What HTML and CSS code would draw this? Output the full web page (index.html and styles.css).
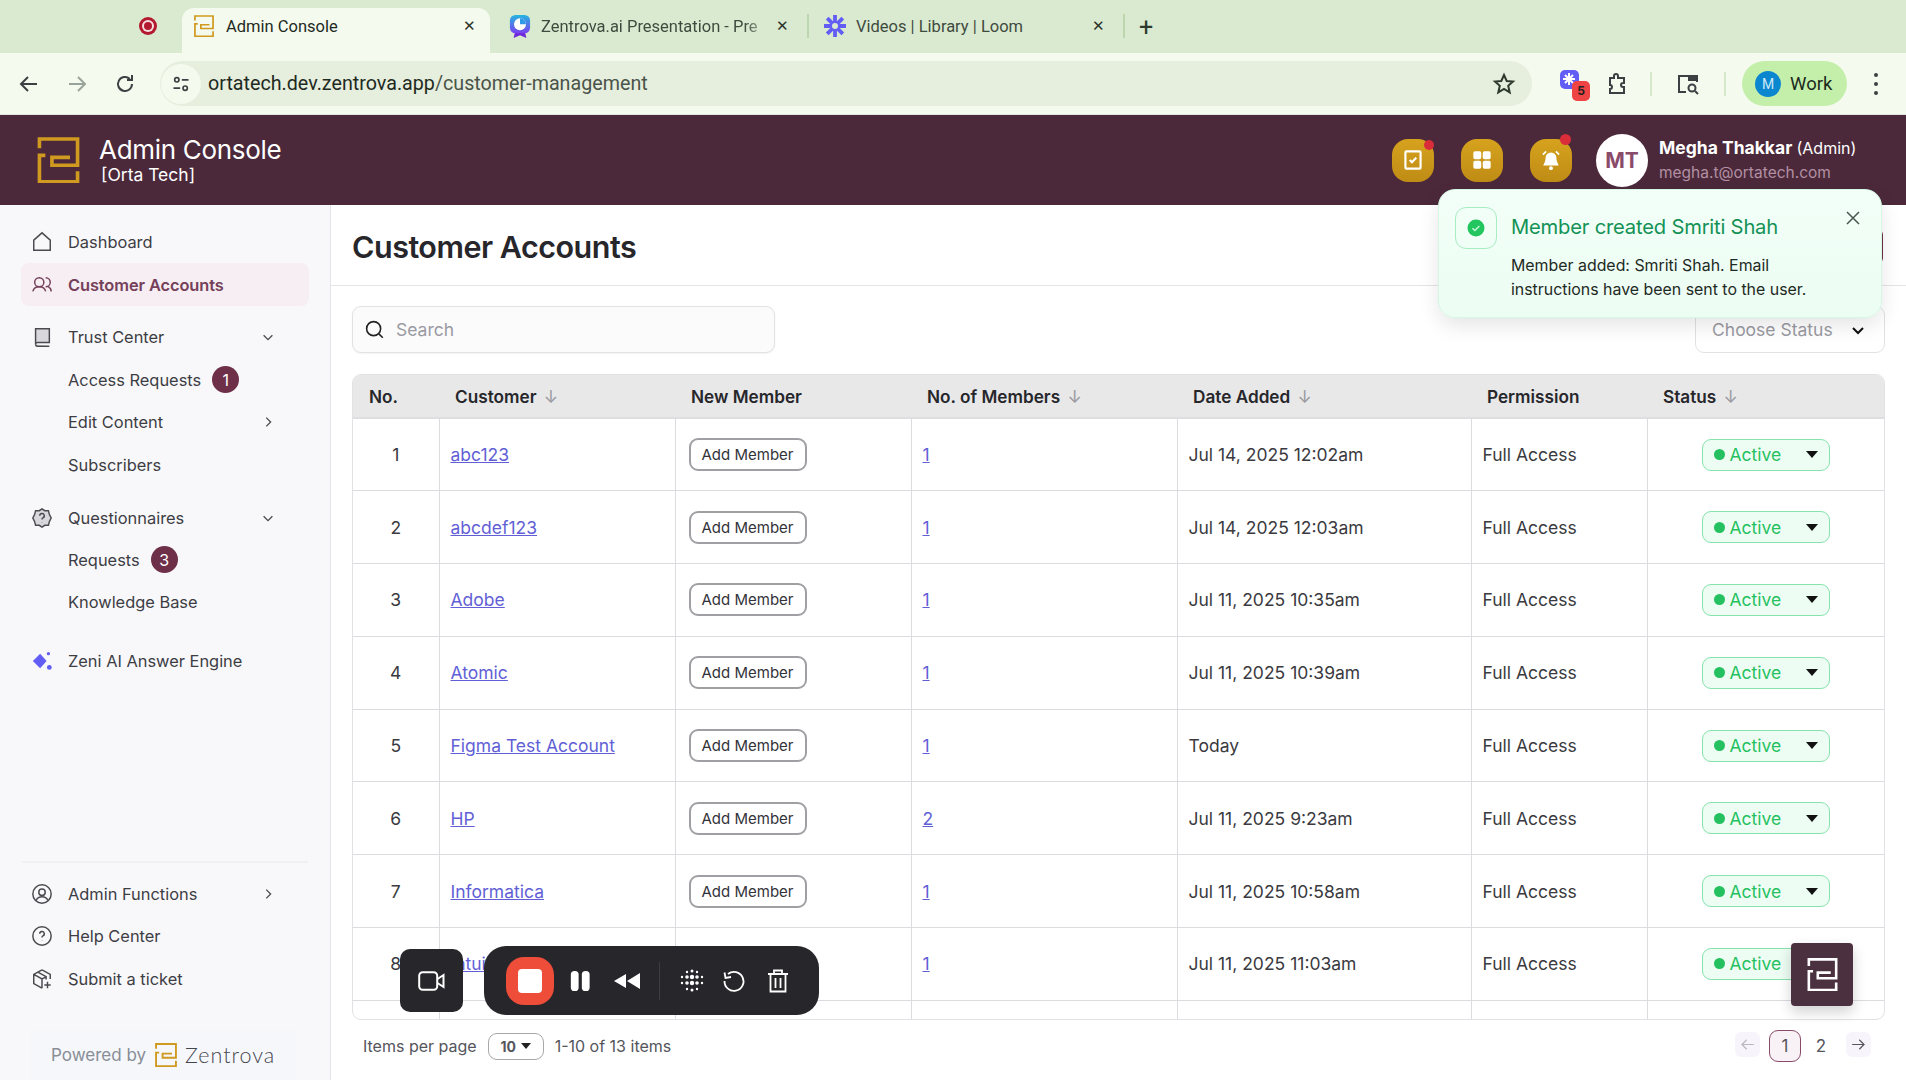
FILE: index.html
```html
<!DOCTYPE html>
<html lang="en">
<head>
<meta charset="utf-8">
<title>Admin Console</title>
<link rel="stylesheet" href="styles.css">
</head>
<body>
<div class="tabbar">
  <svg class="rec" viewBox="0 0 20 20"><circle cx="10" cy="10" r="9" fill="#b3192f"/><circle cx="10" cy="10" r="6" fill="#f4dfe0"/><circle cx="10" cy="10" r="4" fill="#b3192f"/></svg>
  <div class="tab tab-active">
    <svg class="fav" viewBox="36 36 128 140"><path class="logo-line" d="M42 70V42H158V122H80V98H135M60 92H42V172H158V140"/></svg>
    <span class="tab-title">Admin Console</span>
    <span class="tab-x">✕</span>
  </div>
  <div class="tab tab-two">
    <svg class="fav fav-deck" viewBox="0 0 24 26"><defs><linearGradient id="deck" x1="0" y1="0" x2="0" y2="1"><stop offset="0" stop-color="#25b6e0"/><stop offset="1" stop-color="#7a3ff0"/></linearGradient></defs><path d="M7 18l-2 8 7-3 7 3-2-8z" fill="#6d28d9"/><rect x="1" y="1" width="22" height="20" rx="6" fill="url(#deck)"/><circle cx="12" cy="11" r="6.500" fill="#fff"/><path d="M12 11V4.500a6.500 6.500 0 0 1 6.500 6.500z" fill="#2f9be8"/></svg>
    <span class="tab-title fade">Zentrova.ai Presentation - Pre</span>
    <span class="tab-x">✕</span>
  </div>
  <i class="tab-sep"></i>
  <div class="tab tab-three">
    <svg class="fav" viewBox="0 0 24 24"><g stroke="#625df5" stroke-width="3.800"><path d="M12 1v22M1 12h22M4.200 4.200l15.600 15.600M19.800 4.200L4.200 19.800"/></g><circle cx="12" cy="12" r="3" fill="#d9ead0"/></svg>
    <span class="tab-title">Videos | Library | Loom</span>
    <span class="tab-x">✕</span>
  </div>
  <i class="tab-sep"></i>
  <span class="tab-new">+</span>
</div>

<div class="toolbar">
  <svg class="tool" viewBox="0 0 24 24"><path d="M20 12H5M11 5l-7 7 7 7"/></svg>
  <svg class="tool tool-off" viewBox="0 0 24 24"><path d="M4 12h15M13 5l7 7-7 7"/></svg>
  <svg class="tool" viewBox="0 0 24 24"><path d="M19 12a7 7 0 1 1-2.200-5.100M19 3v5h-5"/></svg>
  <div class="omnibox">
    <span class="site-ctl"><svg viewBox="0 0 24 24"><circle cx="7" cy="7" r="2.600"/><path d="M13 7h8M3 17h8"/><circle cx="17" cy="17" r="2.600"/></svg></span>
    <span class="url">ortatech.dev.zentrova.app<span class="url-path">/customer-management</span></span>
    <svg class="star" viewBox="0 0 24 24"><path d="M12 3l2.700 6 6.300.6-4.800 4.200 1.500 6.500-5.700-3.500-5.700 3.500 1.500-6.500L3 9.600 9.300 9z"/></svg>
  </div>
  <div class="ext">
    <svg viewBox="0 0 24 24"><rect x="1" y="1" width="19" height="19" rx="5" fill="#625df5"/><g stroke="#fff" stroke-width="2"><path d="M10 4v12M4 10h12M6 6l8 8M14 6l-8 8"/></g></svg>
    <span class="ext-badge">5</span>
  </div>
  <svg class="tool puzzle" viewBox="0 0 24 24"><path d="M5 6h4V4a2 2 0 0 1 4 0v2h6v5h-1a2 2 0 0 0 0 4h1v6H5v-4a2 2 0 0 0 0-4V6z"/></svg>
  <i class="tool-sep"></i>
  <svg class="tool lens" viewBox="0 0 24 24"><path d="M10 20H3V4h18v6"/><rect x="13" y="4" width="8" height="4" fill="#3c4043"/><circle cx="16" cy="16" r="3.500"/><path d="M19 19l3 3"/></svg>
  <i class="tool-sep sep-two"></i>
  <div class="profile"><span class="profile-m">M</span><span>Work</span></div>
  <div class="kebab"><i></i><i></i><i></i></div>
</div>

<header class="app-head">
  <svg class="brand" viewBox="36 36 128 140"><path class="logo-line" d="M42 70V42H158V122H80V98H135M60 92H42V172H158V140"/></svg>
  <div class="brand-text">
    <div class="brand-name">Admin Console</div>
    <div class="brand-org">[Orta Tech]</div>
  </div>
  <div class="head-icons">
    <span class="head-btn dot-in"><svg viewBox="0 0 24 24"><rect x="5" y="4" width="14" height="16" rx="1" fill="none" stroke="#fff" stroke-width="2"/><path d="M9 12l2 2 4-4" fill="none" stroke="#fff" stroke-width="2"/></svg></span>
    <span class="head-btn"><svg viewBox="0 0 24 24"><rect x="4" y="4" width="7.300" height="7.300" rx="1.500" fill="#fff"/><rect x="12.700" y="4" width="7.300" height="7.300" rx="1.500" fill="#fff"/><rect x="4" y="12.700" width="7.300" height="7.300" rx="1.500" fill="#fff"/><rect x="12.700" y="12.700" width="7.300" height="7.300" rx="1.500" fill="#fff"/></svg></span>
    <span class="head-btn dot-out"><svg viewBox="0 0 24 24"><path d="M12 5a5 5 0 0 0-5 5c0 4-2 6-2 7h14c0-1-2-3-2-7a5 5 0 0 0-5-5z" fill="#fff"/><circle cx="12" cy="19.500" r="1.800" fill="#fff"/><path d="M4.500 7l3-3M19.500 7l-3-3" stroke="#fff" stroke-width="1.500"/></svg></span>
  </div>
  <div class="avatar">MT</div>
  <div class="user">
    <div class="user-name">Megha Thakkar <span class="user-role">(Admin)</span></div>
    <div class="user-mail">megha.t@ortatech.com</div>
  </div>
</header>

<div class="shell">
  <aside class="sidebar">
    <div class="nav-group">
      <div class="nav-item"><svg class="nav-ic" viewBox="0 0 24 24"><path d="M3 21V10l9-8 9 8v11z"/></svg><span>Dashboard</span></div>
      <div class="nav-item nav-active"><svg class="nav-ic" viewBox="0 0 24 24"><circle cx="9" cy="9" r="5"/><path d="M2 19c1-4 4-5 7-5s6 1 7 5M16 4a5 5 0 0 1 0 10M19 14c2 1 3 3 3 5"/></svg><span>Customer Accounts</span></div>
    </div>
    <div class="nav-group">
      <div class="nav-item"><svg class="nav-ic ic-fill" viewBox="0 0 24 24"><path d="M5 3h15v15H7a2 2 0 0 0-2 2z"/><path d="M5 20a2 2 0 0 0 2 2h13"/></svg><span>Trust Center</span><svg class="chev" viewBox="0 0 16 16"><path d="M3 6l5 5 5-5"/></svg></div>
      <div class="nav-item nav-sub"><span>Access Requests</span><b class="count">1</b></div>
      <div class="nav-item nav-sub"><span>Edit Content</span><svg class="chev" viewBox="0 0 16 16"><path d="M6 3l5 5-5 5"/></svg></div>
      <div class="nav-item nav-sub"><span>Subscribers</span></div>
    </div>
    <div class="nav-group">
      <div class="nav-item"><svg class="nav-ic ic-fill" viewBox="0 0 24 24"><path d="M12 2l3 2 4 0 1 4 2 4-2 4-1 4-4 0-3 2-3-2-4 0-1-4-2-4 2-4 1-4 4 0z"/><path d="M9.500 9.500a2.500 2.500 0 1 1 3.500 2.300c-.7.300-1 .8-1 1.700M12 16.500v.5"/></svg><span>Questionnaires</span><svg class="chev" viewBox="0 0 16 16"><path d="M3 6l5 5 5-5"/></svg></div>
      <div class="nav-item nav-sub"><span>Requests</span><b class="count">3</b></div>
      <div class="nav-item nav-sub"><span>Knowledge Base</span></div>
    </div>
    <div class="nav-group nav-zeni">
      <div class="nav-item"><svg class="nav-ic ic-zeni" viewBox="0 0 24 24"><path d="M10 4l7 8-7 8-8-8z"/><circle cx="19" cy="4" r="1.800"/><circle cx="20" cy="19" r="2.600"/></svg><span>Zeni AI Answer Engine</span></div>
    </div>
    <div class="nav-spacer"></div>
    <div class="nav-bottom">
      <div class="nav-item"><svg class="nav-ic" viewBox="0 0 24 24"><circle cx="12" cy="12" r="10"/><circle cx="12" cy="10" r="3.500"/><path d="M5.500 19c1.500-3 4-4 6.500-4s5 1 6.500 4"/></svg><span>Admin Functions</span><svg class="chev" viewBox="0 0 16 16"><path d="M6 3l5 5-5 5"/></svg></div>
      <div class="nav-item"><svg class="nav-ic" viewBox="0 0 24 24"><circle cx="12" cy="12" r="10"/><path d="M9.500 9.500a2.500 2.500 0 1 1 3.500 2.300c-.7.300-1 .8-1 1.700M12 16.500v.5"/></svg><span>Help Center</span></div>
      <div class="nav-item"><svg class="nav-ic" viewBox="0 0 24 24"><path d="M12 2l9 5v5M12 2L3 7v10l9 5M3 7l9 5 4-2M7.500 4.500l9 5v3M12 12v10"/><path d="M18 15v7M14.500 18.500h7"/></svg><span>Submit a ticket</span></div>
    </div>
    <div class="powered">
      <span>Powered by</span>
      <svg class="pow-logo" viewBox="36 36 128 140"><path class="logo-line" d="M42 70V42H158V122H80V98H135M60 92H42V172H158V140"/></svg>
      <span class="pow-name">Zentrova</span>
    </div>
  </aside>

  <main class="main">
    <div class="title-row">
      <h1>Customer Accounts</h1>
      <button class="cta">Add Customer</button>
    </div>
    <div class="filters">
      <div class="search">
        <svg viewBox="0 0 24 24"><circle cx="11" cy="11" r="8"/><path d="M17 17l4.500 4.500"/></svg>
        <span>Search</span>
      </div>
      <div class="status-filter"><span>Choose Status</span><svg viewBox="0 0 16 16"><path d="M3 6l5 5 5-5"/></svg></div>
    </div>
    <div class="table-wrap">
      <table>
        <colgroup><col class="c1"><col class="c2"><col class="c3"><col class="c4"><col class="c5"><col class="c6"><col class="c7"></colgroup>
        <thead>
          <tr>
            <th>No.</th>
            <th>Customer <span class="sort">↓</span></th>
            <th>New Member</th>
            <th>No. of Members <span class="sort">↓</span></th>
            <th>Date Added <span class="sort">↓</span></th>
            <th>Permission</th>
            <th>Status <span class="sort">↓</span></th>
          </tr>
        </thead>
        <tbody>
          <tr><td class="num">1</td><td><a href="#">abc123</a></td><td><button class="add">Add Member</button></td><td><a href="#">1</a></td><td>Jul 14, 2025 12:02am</td><td>Full Access</td><td class="st"><span class="pill"><i></i>Active<b></b></span></td></tr>
          <tr><td class="num">2</td><td><a href="#">abcdef123</a></td><td><button class="add">Add Member</button></td><td><a href="#">1</a></td><td>Jul 14, 2025 12:03am</td><td>Full Access</td><td class="st"><span class="pill"><i></i>Active<b></b></span></td></tr>
          <tr><td class="num">3</td><td><a href="#">Adobe</a></td><td><button class="add">Add Member</button></td><td><a href="#">1</a></td><td>Jul 11, 2025 10:35am</td><td>Full Access</td><td class="st"><span class="pill"><i></i>Active<b></b></span></td></tr>
          <tr><td class="num">4</td><td><a href="#">Atomic</a></td><td><button class="add">Add Member</button></td><td><a href="#">1</a></td><td>Jul 11, 2025 10:39am</td><td>Full Access</td><td class="st"><span class="pill"><i></i>Active<b></b></span></td></tr>
          <tr><td class="num">5</td><td><a href="#">Figma Test Account</a></td><td><button class="add">Add Member</button></td><td><a href="#">1</a></td><td>Today</td><td>Full Access</td><td class="st"><span class="pill"><i></i>Active<b></b></span></td></tr>
          <tr><td class="num">6</td><td><a href="#">HP</a></td><td><button class="add">Add Member</button></td><td><a href="#">2</a></td><td>Jul 11, 2025 9:23am</td><td>Full Access</td><td class="st"><span class="pill"><i></i>Active<b></b></span></td></tr>
          <tr><td class="num">7</td><td><a href="#">Informatica</a></td><td><button class="add">Add Member</button></td><td><a href="#">1</a></td><td>Jul 11, 2025 10:58am</td><td>Full Access</td><td class="st"><span class="pill"><i></i>Active<b></b></span></td></tr>
          <tr><td class="num">8</td><td><a href="#">Intuit</a></td><td><button class="add">Add Member</button></td><td><a href="#">1</a></td><td>Jul 11, 2025 11:03am</td><td>Full Access</td><td class="st"><span class="pill"><i></i>Active<b></b></span></td></tr>
          <tr><td class="num"></td><td></td><td></td><td></td><td></td><td></td><td></td></tr>
        </tbody>
      </table>
    </div>
    <div class="pager">
      <span>Items per page</span>
      <span class="per"><b>10</b><i></i></span>
      <span>1-10 of 13 items</span>
      <div class="pages">
        <svg class="pg-arrow pg-off" viewBox="0 0 24 24"><path d="M20 12H5M11 6l-6 6 6 6"/></svg>
        <span class="pg pg-on">1</span>
        <span class="pg">2</span>
        <svg class="pg-arrow pg-next" viewBox="0 0 24 24"><path d="M4 12h15M13 6l6 6-6 6"/></svg>
      </div>
    </div>
  </main>
</div>

<div class="toast">
  <span class="toast-ic"><svg viewBox="0 0 20 20"><circle cx="10" cy="10" r="8.500" fill="#22c55e"/><path d="M6.500 10.200l2.400 2.300 4.500-4.600" fill="none" stroke="#c9f7da" stroke-width="1.500"/></svg></span>
  <div class="toast-body">
    <div class="toast-title">Member created Smriti Shah</div>
    <div class="toast-text">Member added: Smriti Shah. Email instructions have been sent to the user.</div>
  </div>
  <svg class="toast-x" viewBox="0 0 16 16"><path d="M2 2l12 12M14 2L2 14"/></svg>
</div>

<div class="cam"><svg viewBox="0 0 28 20"><rect x="1.200" y="1.200" width="18" height="17.600" rx="3.500"/><path d="M19.500 8l6-4v12l-6-4"/></svg></div>
<div class="rec-bar">
  <span class="rec-stop"><i></i></span>
  <svg class="rb-ic rb-pause" viewBox="0 0 24 24"><rect x="2" y="1" width="8.500" height="22" rx="4" fill="#fff"/><rect x="14" y="1" width="8.500" height="22" rx="4" fill="#fff"/></svg>
  <svg class="rb-ic rb-rew" viewBox="0 0 28 20"><path d="M13 3v14L1 10z M27 2v16L14 10z" fill="#fff"/></svg>
  <i class="rb-sep"></i>
  <svg class="rb-ic rb-dots" viewBox="0 0 24 24" fill="#fff"><circle cx="12" cy="2" r="1.500"/><circle cx="7" cy="3" r="1.200"/><circle cx="17" cy="3" r="1.200"/><circle cx="2" cy="8" r="1.200"/><circle cx="7" cy="8" r="1.800"/><circle cx="12" cy="8" r="2.200"/><circle cx="17" cy="8" r="1.800"/><circle cx="22" cy="8" r="1.200"/><circle cx="2" cy="14" r="1.200"/><circle cx="7" cy="14" r="1.800"/><circle cx="12" cy="14" r="2.200"/><circle cx="17" cy="14" r="1.800"/><circle cx="22" cy="14" r="1.200"/><circle cx="7" cy="20" r="1.200"/><circle cx="12" cy="21" r="1.500"/><circle cx="17" cy="20" r="1.200"/></svg>
  <svg class="rb-ic rb-line" viewBox="0 0 24 24"><path d="M6 5a9.500 9.500 0 1 1-3.500 7M2.500 3.500l1 5.500 5.500-1"/></svg>
  <svg class="rb-ic rb-line" viewBox="0 0 24 24"><path d="M2 5h20M8 5V1.500h8V5M4.500 5v17.500h15V5M9.500 9v10M14.500 9v10"/></svg>
</div>
<div class="float-logo"><svg viewBox="36 36 128 140"><path class="logo-line logo-white" d="M42 70V42H158V122H80V98H135M60 92H42V172H158V140"/></svg></div>
</body>
</html>
```

FILE: styles.css
```css
* { box-sizing: border-box; }
html, body { margin: 0; height: 1080px; overflow: hidden; }
body { font-family: Inter, "Liberation Sans", sans-serif; color: #36363c; background: #fff; position: relative; display: flex; flex-direction: column; }
svg { display: block; flex: none; }
.logo-line { fill: none; stroke: #cf9a1f; stroke-width: 11; }
.logo-white { stroke: #fff; }

/* browser chrome */
.tabbar { height: 53px; background: #d9ead0; display: flex; align-items: flex-end; padding-left: 138px; flex: none; font-family: Roboto, sans-serif; }
.rec { width: 20px; height: 20px; margin: 0 24px 17px 0; }
.tab { height: 45px; display: flex; align-items: center; font-size: 16.5px; color: #3f4a3f; }
.tab-active { width: 308px; background: #f4faee; border-radius: 12px 12px 0 0; padding: 0 11px 9px 12px; color: #1f2a1f; }
.tab-two { width: 317px; padding: 0 15px 9px 19px; }
.tab-three { width: 314px; padding: 0 15px 9px 14px; }
.fav { width: 20px; height: 22px; margin-right: 12px; }
.fav-deck { width: 22px; height: 24px; margin-right: 10px; }
.tab-three .fav { width: 24px; height: 24px; margin-right: 9px; }
.tab-title { flex: 1; white-space: nowrap; overflow: hidden; }
.fade { -webkit-mask-image: linear-gradient(90deg, #000 88%, transparent); mask-image: linear-gradient(90deg, #000 88%, transparent); }
.tab-x { font-size: 15px; width: 20px; text-align: center; color: #2b332b; }
.tab-sep { width: 2px; height: 24px; background: #bcd6ae; margin-bottom: 15px; }
.tab-new { font-size: 25px; font-weight: 400; margin: 0 0 13px 14px; color: #2f3a2f; line-height: 1; }

.toolbar { height: 62px; background: #f4faee; display: flex; align-items: center; padding-left: 17px; flex: none; border-bottom: 1px solid #e4e4e0; }
.tool { width: 24px; height: 24px; fill: none; stroke: #3c4043; stroke-width: 2; margin-right: 24px; }
.tool-off { stroke: #9aa39a; }
.omnibox { width: 1372px; height: 45px; margin-left: -1px; background: #e6eedd; border-radius: 23px; display: flex; align-items: center; padding-left: 1px; margin-right: 27px; font-family: Roboto, sans-serif; }
.site-ctl { width: 40px; height: 40px; border-radius: 50%; background: #f4faee; display: flex; align-items: center; justify-content: center; margin-right: 7px; }
.site-ctl svg { width: 20px; height: 20px; fill: none; stroke: #3c4043; stroke-width: 2; }
.url { font-size: 19.700px; color: #1f2a1f; flex: 1; }
.url-path { color: #4a544a; }
.star { width: 24px; height: 24px; fill: none; stroke: #2f3a2f; stroke-width: 2; margin-right: 16px; }
.ext { width: 30px; height: 30px; position: relative; margin-right: 16px; }
.ext svg { width: 24px; height: 24px; }
.ext-badge { position: absolute; left: 13px; top: 12px; width: 18px; height: 20px; border-radius: 5px; background: #ee4444; color: #222; font-size: 12px; font-weight: 700; text-align: center; line-height: 20px; }
.puzzle { margin-right: 21px; }
.tool-sep { width: 2px; height: 24px; background: #d5e8c8; margin-right: 24px; }
.lens { margin-right: 24px; }
.sep-two { margin-right: 16px; }
.profile { width: 105px; height: 45px; border-radius: 23px; background: #c3efab; display: flex; align-items: center; gap: 9px; padding-left: 13px; font-family: Roboto, sans-serif; font-size: 18.500px; color: #1c2a1c; }
.profile-m { width: 26px; height: 26px; border-radius: 50%; background: #0b87cf; color: #cfe9f7; font-size: 14px; display: flex; align-items: center; justify-content: center; }
.kebab { margin-left: 27px; display: flex; flex-direction: column; gap: 5px; }
.kebab i { width: 4px; height: 4px; border-radius: 50%; background: #3c4043; }

/* app header */
.app-head { height: 90px; background: #4b293a; display: flex; align-items: center; padding-left: 37px; flex: none; color: #fff; }
.brand { width: 43px; height: 46px; margin-right: 19px; }
.brand-name { font-size: 26px; line-height: 30px; letter-spacing: -.3px; margin-bottom: -1px; }
.brand-org { font-size: 17.500px; line-height: 21px; margin-left: 2px; }
.head-icons { margin-left: auto; display: flex; gap: 27px; margin-right: 24px; }
.head-btn { width: 42px; height: 43px; border-radius: 16px; background: linear-gradient(#d6a21e, #bf8c15); display: flex; align-items: center; justify-content: center; position: relative; }
.head-btn svg { width: 26px; height: 26px; }
.dot-in::after, .dot-out::after { content: ""; position: absolute; width: 10px; height: 10px; border-radius: 50%; background: #d92d3a; right: 0; top: 1px; }
.dot-out::after { top: -5px; right: 1px; width: 11px; height: 11px; }
.avatar { width: 52px; height: 53px; border-radius: 50%; background: #fff; color: #8a4a6a; font-weight: 700; font-size: 21px; display: flex; align-items: center; justify-content: center; margin-right: 11px; }
.user { width: 247px; }
.user-name { font-size: 17.500px; font-weight: 700; line-height: 26px; }
.user-role { font-size: 16px; font-weight: 400; }
.user-mail { font-size: 15.500px; line-height: 24px; color: #b28fa3; }

/* shell */
.shell { flex: 1; display: flex; min-height: 0; }
.sidebar { width: 331px; flex: none; background: #f8f8fa; border-right: 1px solid #e4e4e8; padding: 16px 22px 0; display: flex; flex-direction: column; }
.nav-group { margin-bottom: 10.500px; }
.nav-zeni { margin: 5.500px 0 0; }
.nav-item { height: 42.400px; display: flex; align-items: center; padding-left: 9px; padding-right: 33px; font-size: 16.400px; color: #3d3d44; border-radius: 8px; }
.nav-ic { width: 22px; height: 22px; margin-right: 15px; fill: none; stroke: #4a4a50; stroke-width: 1.600; }
.ic-fill { fill: #d8d8dc; }
.ic-zeni { fill: #625df5; stroke: none; }
.nav-active { background: #f6eef2; color: #74405a; font-weight: 600; letter-spacing: -.1px; margin: 0 -1px; padding-left: 10px; }
.nav-active .nav-ic { stroke: #74405a; }
.nav-sub { padding-left: 46px; }
.chev { width: 14px; height: 14px; margin-left: auto; fill: none; stroke: #4a4a50; stroke-width: 1.500; }
.count { width: 27px; height: 27px; border-radius: 50%; background: #6e3049; color: #fff; font-weight: 400; font-size: 16px; display: flex; align-items: center; justify-content: center; margin-left: 11px; }
.nav-spacer { flex: 1; }
.nav-bottom { border-top: 2px solid #f0f0f3; padding-top: 10px; margin-bottom: 30px; }
.powered { height: 50px; margin: 0 13px 0 8px; padding-left: 21px; background: #f5f7fb; display: flex; align-items: center; color: #888d96; font-size: 17px; white-space: nowrap; }
.pow-logo { width: 22px; height: 24px; margin: 0 8px 0 9px; }
.pow-name { font-family: Lato, sans-serif; font-weight: 300; font-size: 21.500px; letter-spacing: 1px; color: #45454c; }

/* main */
.main { flex: 1; min-width: 0; display: flex; flex-direction: column; }
.title-row { height: 81px; border-bottom: 1px solid #e4e4e8; display: flex; align-items: center; justify-content: space-between; padding: 3px 23px 0 21px; }
h1 { margin: 0; font-size: 30.500px; font-weight: 600; color: #26262b; letter-spacing: -.5px; }
.cta { width: 200px; height: 35px; border: 0; border-radius: 6px; background: #6e3049; color: #fff; font: inherit; }
.filters { display: flex; justify-content: space-between; align-items: flex-start; padding: 20px 21px 0; height: 88px; }
.search { width: 423px; height: 47px; border: 1px solid #e2e2e6; border-radius: 9px; background: #fbfbfc; display: flex; align-items: center; padding-left: 11px; gap: 11px; color: #9a9aa2; font-size: 17.500px; box-shadow: 0 1px 2px rgba(0,0,0,.05); }
.search svg { width: 21px; height: 21px; fill: none; stroke: #222; stroke-width: 1.800; }
.status-filter { width: 190px; height: 47px; border: 1px solid #e2e2e6; border-radius: 9px; display: flex; align-items: center; justify-content: space-between; padding: 0 18px 0 16px; color: #9a9aa2; font-size: 17.500px; }
.status-filter svg { width: 16px; height: 16px; fill: none; stroke: #111; stroke-width: 2; }
.table-wrap { margin: 0 21px; height: 646px; border: 1px solid #e2e2e6; border-radius: 9px; overflow: hidden; flex: none; }
table { width: 100%; table-layout: fixed; border-collapse: collapse; font-size: 17.500px; }
.c1 { width: 86px; } .c2 { width: 236px; } .c3 { width: 236px; } .c4 { width: 266px; } .c5 { width: 294px; } .c6 { width: 176px; }
th { height: 43px; background: #e8e8e8; text-align: left; padding: 0 0 0 16px; font-size: 17.200px; font-weight: 600; color: #26262b; border-bottom: 2px solid #dedee0; }
.sort { color: #9a9aa0; font-weight: 400; margin-left: 3px; }
td { height: 72.800px; padding: 0 0 0 11px; border-right: 1px solid #dcdce0; border-bottom: 1px solid #dcdce0; color: #3a3a40; }
td:last-child { border-right: 0; }
.num { text-align: center; padding: 0; }
a { color: #625fd6; }
.add { width: 118px; height: 33px; margin-left: 2px; background: #fff; border: 2px solid #a0a0a4; border-radius: 9px; font: inherit; font-size: 15px; color: #33333a; }
.st { padding-left: 54px; }
.pill { width: 128px; height: 32px; display: flex; align-items: center; border: 1px solid #86e3ac; border-radius: 9px; background: #eefdf4; color: #25c160; padding-left: 11px; }
.pill i { width: 11px; height: 11px; border-radius: 50%; background: #25c160; margin-right: 5px; }
.pill b { width: 0; height: 0; border-left: 6px solid transparent; border-right: 6px solid transparent; border-top: 7px solid #111; margin-left: auto; margin-right: 11px; }
.pager { height: 52px; display: flex; align-items: center; gap: 11px; padding: 0 35px 0 32px; color: #55555c; font-size: 16px; flex: none; }
.per { width: 56px; height: 27px; border: 1px solid #a8a8ac; border-radius: 9px; display: flex; align-items: center; justify-content: center; gap: 5px; font-size: 14px; }
.per i { width: 0; height: 0; border-left: 5px solid transparent; border-right: 5px solid transparent; border-top: 6px solid #222; }
.pages { margin-left: auto; display: flex; align-items: center; }
.pg { width: 32px; height: 32px; border-radius: 9px; display: flex; align-items: center; justify-content: center; font-size: 17px; margin: 0 2px; }
.pg-on { border: 1px solid #8a4a6a; background: #f8f2f6; }
.pg-arrow { width: 25px; height: 25px; padding: 3px; fill: none; stroke: #55555c; stroke-width: 1.500; background: #f7f5fb; border-radius: 6px; margin-bottom: 3px; }
.pg-off { stroke: #b8b8be; margin-right: 7px; }
.pg-next { margin-left: 7px; }

/* overlays */
.toast { position: absolute; left: 1438px; top: 189px; width: 444px; height: 129px; background: linear-gradient(#f2fff8, #ecfdf3); border: 1px solid #d5f7e3; border-radius: 17px; box-shadow: 0 8px 20px rgba(0,0,0,.1); display: flex; padding: 17px 0 0 16px; }
.toast-ic { width: 42px; height: 42px; border: 1px solid #a8ecc3; border-radius: 11px; display: flex; align-items: center; justify-content: center; margin-right: 14px; flex: none; }
.toast-ic svg { width: 20px; height: 20px; }
.toast-body { width: 310px; }
.toast-title { font-size: 20.200px; line-height: 40px; color: #149256; margin-bottom: 7px; white-space: nowrap; letter-spacing: -.2px; }
.toast-text { font-size: 15.900px; line-height: 24px; color: #1f2a24; }
.toast-x { position: absolute; right: 20px; top: 20px; width: 16px; height: 16px; fill: none; stroke: #4a5550; stroke-width: 1.500; }
.cam { position: absolute; left: 400px; top: 949px; width: 63px; height: 63px; background: #26262b; border-radius: 10px; display: flex; align-items: center; justify-content: center; }
.cam svg { width: 28px; height: 20px; fill: none; stroke: #fff; stroke-width: 2; }
.rec-bar { position: absolute; left: 484px; top: 946px; width: 335px; height: 69px; background: #26262b; border-radius: 22px; display: flex; align-items: center; padding-left: 22px; }
.rec-stop { width: 48px; height: 48px; border-radius: 18px; background: #ee4d3a; display: flex; align-items: center; justify-content: center; margin-right: 15px; flex: none; }
.rec-stop i { width: 24px; height: 24px; border-radius: 4px; background: #fff; }
.rb-ic { width: 22px; height: 24px; margin-right: 16px; }
.rb-pause { margin-right: 22px; }
.rb-rew { width: 28px; height: 20px; margin-right: 18px; }
.rb-sep { width: 1px; height: 38px; background: #3c3c42; margin-right: 20px; }
.rb-dots { width: 24px; margin-right: 18px; }
.rb-line { fill: none; stroke: #fff; stroke-width: 1.800; width: 24px; margin-right: 20px; }
.float-logo { position: absolute; left: 1791px; top: 943px; width: 62px; height: 63px; background: #4b3140; border-radius: 4px; display: flex; align-items: center; justify-content: center; box-shadow: 0 6px 14px rgba(0,0,0,.18); }
.float-logo svg { width: 31px; height: 33px; }
```
